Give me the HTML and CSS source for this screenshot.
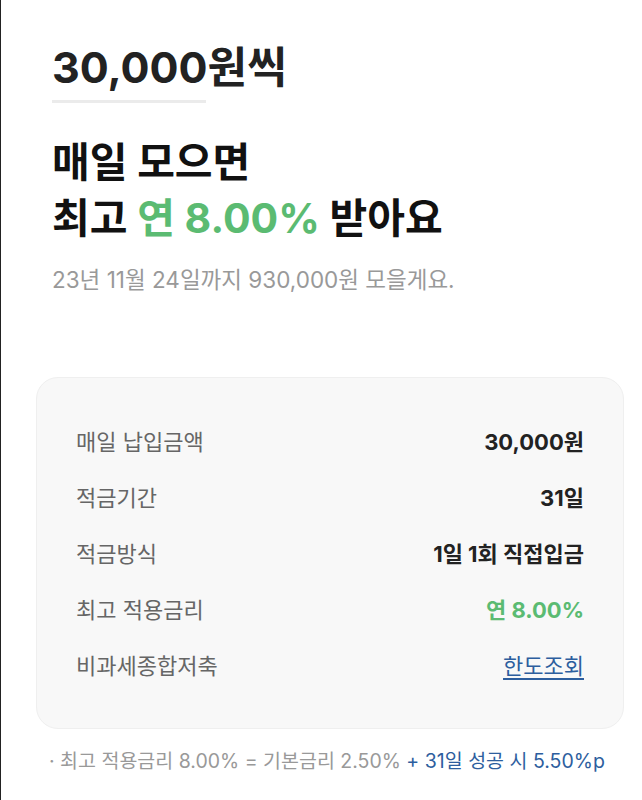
FILE: index.html
```html
<!DOCTYPE html>
<html lang="ko">
<head>
    <meta charset="UTF-8">
    <meta name="viewport" content="width=device-width, initial-scale=1.0">
    <title>매일 적금</title>
    <link rel="stylesheet" href="styles.css">
</head>
<body>

<div class="page">
    <!-- Amount and summary -->
    <div class="intro">
        <div class="amount">30,000원씩</div>
        <div class="amount-line"></div>
        <h1 class="headline">
            매일 모으면<br>
            최고 <span class="green">연 8.00%</span> 받아요
        </h1>
        <p class="goal">23년 11월 24일까지 930,000원 모을게요.</p>
    </div>

    <!-- Product details -->
    <div class="card">
        <div class="row">
            <span class="label">매일 납입금액</span>
            <strong class="value">30,000원</strong>
        </div>
        <div class="row">
            <span class="label">적금기간</span>
            <strong class="value">31일</strong>
        </div>
        <div class="row">
            <span class="label">적금방식</span>
            <strong class="value">1일 1회 직접입금</strong>
        </div>
        <div class="row">
            <span class="label">최고 적용금리</span>
            <strong class="value green">연 8.00%</strong>
        </div>
        <div class="row">
            <span class="label">비과세종합저축</span>
            <a class="limit-link" href="#">한도조회</a>
        </div>
    </div>

    <p class="note">· 최고 적용금리 8.00% = 기본금리 2.50% <span class="blue">+ 31일 성공 시 5.50%p</span></p>
</div>

</body>
</html>
```

FILE: styles.css
```css
/* General page */
body {
    margin: 0;
    background-color: #fff;
    font-family: 'Inter', 'Noto Sans CJK KR', sans-serif;
    color: #222;
}

.page {
    border-left: 1px solid #222;
    min-height: 800px;
    box-sizing: border-box;
    padding: 0 18px 0 35px;
}

/* Top summary */
.intro {
    padding: 40px 16px 0;
}

.amount {
    font-size: 43px;
    font-weight: 700;
    color: #222;
    line-height: 54px;
}

.amount-line {
    width: 154px;
    height: 3px;
    margin-top: 6px;
    background-color: #ebebeb;
}

.headline {
    margin: 31px 0 0;
    font-size: 41px;
    font-weight: 700;
    line-height: 56px;
    color: #111;
}

.green {
    color: #5bbb72;
}

.goal {
    margin: 20px 0 0;
    font-size: 22.5px;
    color: #999;
    line-height: 28px;
}

/* Details card */
.card {
    margin-top: 83px;
    background-color: #f8f8f8;
    border: 1px solid #efefef;
    border-radius: 22px;
    padding: 34px 39px 36px;
}

.row {
    display: flex;
    justify-content: space-between;
    align-items: center;
    height: 56px;
    font-size: 22px;
}

.label {
    color: #666;
}

.value {
    font-weight: 700;
    color: #222;
}

.value.green {
    color: #5bbb72;
}

.limit-link {
    color: #2d5e9e;
    text-decoration: underline;
    text-underline-offset: 4px;
}

/* Footnote */
.note {
    margin: 19px 0 0 13px;
    font-size: 19.5px;
    line-height: 26px;
    color: #999;
}

.blue {
    color: #2d5e9e;
}
```
